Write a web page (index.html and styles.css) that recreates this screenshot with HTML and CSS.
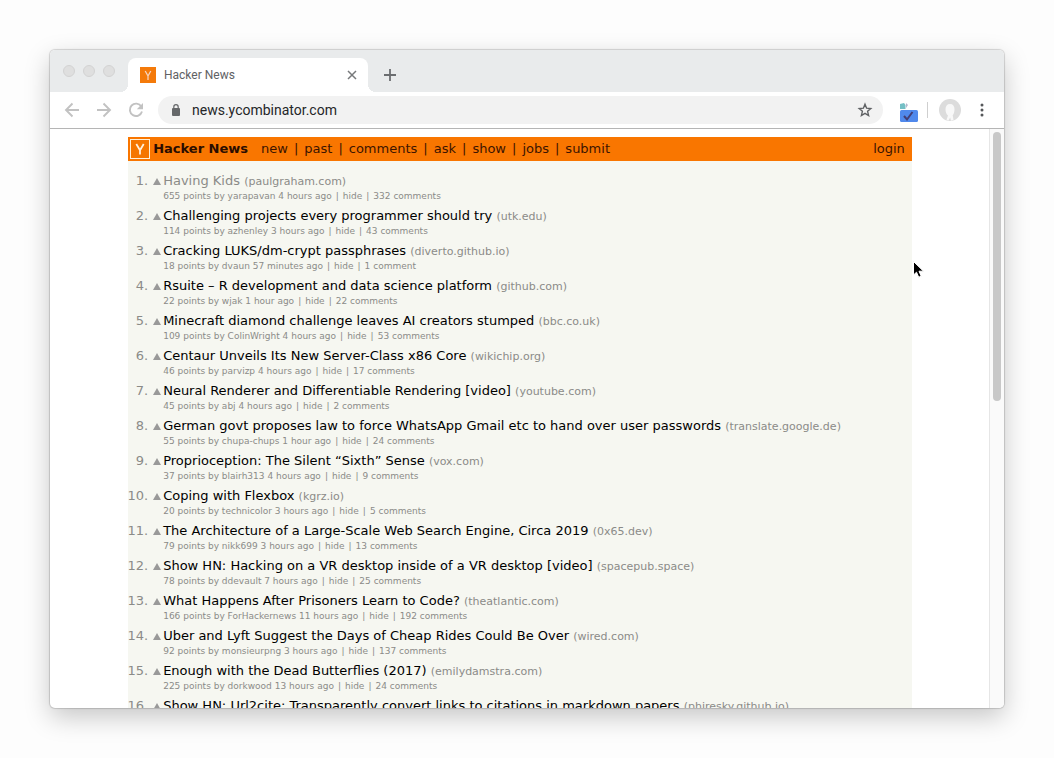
FILE: index.html
```html
<!DOCTYPE html>
<html lang="en">
<head>
<meta charset="utf-8">
<title>Hacker News</title>
<link rel="stylesheet" href="styles.css">
</head>
<body>
<div class="window">
  <header class="tabstrip">
    <div class="lights"><i></i><i></i><i></i></div>
    <div class="tab">
      <svg class="favicon" viewBox="0 0 16 16" aria-hidden="true"><rect width="16" height="16" fill="#f47a0a"/><path d="M5.2 4 8 9l2.800-5M8 8.500V13" fill="none" stroke="#f6d3bd" stroke-width="1.300"/></svg>
      <span class="tab-title">Hacker News</span>
      <button class="icon tab-close" aria-label="Close tab"><svg width="10" height="10" viewBox="0 0 10 10"><path d="M1 1l8 8M9 1l-8 8" stroke="#77797b" stroke-width="1.500"/></svg></button>
    </div>
    <button class="icon new-tab" aria-label="New tab"><svg width="12" height="12" viewBox="0 0 12 12"><path d="M6 0v12M0 6h12" stroke="#6b6d70" stroke-width="1.800"/></svg></button>
  </header>
  <div class="toolbar">
    <button class="icon" aria-label="Back"><svg width="16" height="16" viewBox="0 0 16 16"><path d="M15 8H2M8.500 1.500 2 8l6.500 6.500" fill="none" stroke="#c2c2c2" stroke-width="1.900"/></svg></button>
    <button class="icon" aria-label="Forward"><svg width="16" height="16" viewBox="0 0 16 16"><path d="M1 8h13M7.500 1.500 14 8l-6.500 6.500" fill="none" stroke="#c2c2c2" stroke-width="1.900"/></svg></button>
    <button class="icon" aria-label="Reload"><svg width="16" height="16" viewBox="0 0 16 16"><path d="M13.300 4.500A6.200 6.200 0 1 0 14 9.500" fill="none" stroke="#c2c2c2" stroke-width="1.900"/><path d="M15 1v6.200H8.800z" fill="#c2c2c2"/></svg></button>
    <div class="address">
      <svg class="lock" width="10" height="12" viewBox="0 0 10 12" aria-hidden="true"><rect x="1" y="4" width="8" height="8" rx="1" fill="#66686a"/><path d="M2.800 5V2.900a2.200 2.200 0 0 1 4.400 0V5" fill="none" stroke="#66686a" stroke-width="1.200"/></svg>
      <input type="text" aria-label="Address" value="news.ycombinator.com">
      <button class="icon" aria-label="Bookmark"><svg width="16" height="16" viewBox="0 0 16 16"><path d="M8 2.200l1.600 4 4.200.3-3.200 2.800 1 4.200L8 11.300l-3.600 2.200 1-4.200-3.200-2.800 4.200-.3z" fill="none" stroke="#606265" stroke-width="1.400"/></svg></button>
    </div>
    <button class="icon ext" aria-label="Extension"><svg width="18" height="22" viewBox="0 0 18 22"><path d="M0 4l4-1 1.500 2v4H0z" fill="#74bfc5"/><path d="M6 3l2 2-2 3z" fill="#b6b5cb"/><rect y="10" width="18" height="12" rx="1.500" fill="#5089ec"/><path d="M4 16l3 3.500L12.500 12" fill="none" stroke="#443f75" stroke-width="2"/></svg></button>
    <span class="divider"></span>
    <button class="icon" aria-label="Profile"><svg width="22" height="22" viewBox="0 0 22 22"><circle cx="11" cy="11" r="11" fill="#dcdcdc"/><path d="M11 5c3 0 4.500 2 4.500 5.500 0 2.500-.8 4.700-1.800 5.700l.8 4.600a11 11 0 0 1-2.500 1l-.8-3.300-1.700 3a11 11 0 0 1-2-.7l1.500-4.400C7.500 15.500 6.500 13 6.500 10.500 6.500 7 8 5 11 5z" fill="#f8f8f8"/></svg></button>
    <button class="icon" aria-label="Menu"><svg width="4" height="14" viewBox="0 0 4 14"><g fill="#55575a"><circle cx="2" cy="2" r="1.500"/><circle cx="2" cy="7" r="1.500"/><circle cx="2" cy="12" r="1.500"/></g></svg></button>
  </div>
  <div class="viewport">
    <main class="page">
      <div class="hn">
        <nav class="topbar">
          <a class="logo" href="#" aria-label="Home"><svg width="20" height="20" viewBox="0 0 20 20"><rect x=".5" y=".5" width="19" height="19" fill="#f57600" stroke="#fff0d8"/><path d="M6.300 5 10 11.200 13.700 5M10 10.500V15.500" fill="none" stroke="#fff0dc" stroke-width="1.800"/></svg></a>
          <a class="brand" href="#">Hacker News</a>
          <span class="links"><a href="#">new</a><span>|</span><a href="#">past</a><span>|</span><a href="#">comments</a><span>|</span><a href="#">ask</a><span>|</span><a href="#">show</a><span>|</span><a href="#">jobs</a><span>|</span><a href="#">submit</a></span>
          <a class="login" href="#">login</a>
        </nav>
        <ol class="stories" id="stories"></ol>
      </div>
    </main>
    <div class="scrollbar"><div class="thumb"></div></div>
  </div>
</div>
<svg class="cursor" width="12" height="18" viewBox="0 0 12 18" aria-hidden="true"><path d="M.5.500v13.500l3-2.800 2.200 5 2.500-1-2.200-5h4.500z" fill="#000" stroke="#fff" stroke-width="1"/></svg>
<script src="stories.js"></script>
</body>
</html>
```
FILE: styles.css
```css
* { box-sizing: border-box; }
body {
  margin: 0;
  padding: 50px;
  height: 100vh;
  position: relative;
  overflow: hidden;
  background: #fdfdfd;
  font-family: "DejaVu Sans", Verdana, sans-serif;
}
a { color: inherit; text-decoration: none; }
.window {
  height: 100%;
  display: flex;
  flex-direction: column;
  overflow: hidden;
  background: #fff;
  border-radius: 5px;
  box-shadow: 0 0 1px 1px rgba(0, 0, 0, .15), 0 9px 26px rgba(0, 0, 0, .22);
}
.icon {
  width: 24px;
  height: 24px;
  padding: 0;
  border: 0;
  background: none;
  display: flex;
  align-items: center;
  justify-content: center;
  flex: none;
}
.tabstrip {
  height: 42px;
  flex: none;
  display: flex;
  align-items: flex-end;
  background: #e9ebec;
}
.lights {
  width: 78px;
  height: 42px;
  padding-left: 13px;
  display: flex;
  gap: 8px;
  align-items: center;
}
.lights i {
  width: 12px;
  height: 12px;
  border-radius: 50%;
  background: #dfdfdf;
  border: 1px solid #d3d3d3;
}
.tab {
  position: relative;
  width: 240px;
  height: 34px;
  padding: 0 4px 0 12px;
  display: flex;
  align-items: center;
  background: #fff;
  border-radius: 8px 8px 0 0;
}
.tab::before, .tab::after {
  content: "";
  position: absolute;
  bottom: 0;
  width: 8px;
  height: 8px;
}
.tab::before { left: -8px; background: radial-gradient(circle at 0 0, transparent 8px, #fff 8px); }
.tab::after { right: -8px; background: radial-gradient(circle at 100% 0, transparent 8px, #fff 8px); }
.favicon { width: 16px; height: 16px; }
.tab-title {
  flex: 1;
  margin-left: 8px;
  font: 12px/16px Roboto, sans-serif;
  color: #5f6164;
}
.new-tab { margin: 0 0 5px 10px; }
.toolbar {
  height: 37px;
  flex: none;
  padding: 0 10px;
  display: flex;
  align-items: center;
  gap: 8px;
  border-bottom: 1px solid #b5b5b5;
}
.address {
  flex: 1;
  height: 28px;
  margin-left: 2px;
  padding: 0 6px 0 13px;
  display: flex;
  align-items: center;
  border-radius: 14px;
  background: #f2f2f2;
}
.lock { flex: none; }
.address input {
  flex: 1;
  min-width: 0;
  margin-left: 11px;
  padding: 0;
  border: 0;
  outline: 0;
  background: none;
  font: 14px/20px Roboto, sans-serif;
  color: #252628;
}
.ext { margin-left: 6px; align-items: flex-end; }
.divider { width: 1px; height: 16px; margin: 0 2px 0 -2px; background: #cfcfcf; }
.viewport { flex: 1; min-height: 0; display: flex; }
.page { flex: 1; min-width: 0; padding: 8px 8px 8px 9px; overflow: hidden; }
.hn { width: 85%; margin: 0 auto; background: #f6f7f1; }
.topbar {
  height: 24px;
  padding: 0 7px 0 2px;
  display: flex;
  align-items: center;
  background: #f97600;
  color: #3c1400;
  font-size: 13px;
  line-height: 18px;
}
.logo { display: flex; }
.brand { margin: 0 13px 0 3px; font-weight: 700; color: #2a0d00; }
.links { flex: 1; display: flex; gap: 6px; }
.stories { list-style: none; margin: 0; padding: 11px 0 0; }
.story {
  display: grid;
  grid-template-columns: 20px 15px 1fr;
  grid-template-rows: 18px 12px;
  margin-bottom: 5px;
  color: #8b8b88;
  white-space: nowrap;
}
.rank { justify-self: end; font-size: 13px; line-height: 18px; }
.vote { width: 8px; height: 18px; margin-left: 5px; padding: 0; border: 0; background: none; display: flex; align-items: center; }
.headline { font-size: 13px; line-height: 18px; color: #000; }
.visited { color: #8b8b88; }
.site { font-size: 11px; color: #8b8b88; }
.meta { grid-column: 3; display: flex; gap: 4px; font-size: 9px; line-height: 12px; }
.scrollbar { width: 15px; padding: 3px; background: #fafafa; border-left: 1px solid #e6e6e6; }
.thumb { width: 8px; height: 47%; border-radius: 4px; background: #c8c8c8; }
.cursor { position: absolute; left: 913px; top: 261px; }
```
FILE: stories.js
```js
const stories = [
  ["Having Kids", "paulgraham.com", "655 points by yarapavan 4 hours ago", "332 comments"],
  ["Challenging projects every programmer should try", "utk.edu", "114 points by azhenley 3 hours ago", "43 comments"],
  ["Cracking LUKS/dm-crypt passphrases", "diverto.github.io", "18 points by dvaun 57 minutes ago", "1 comment"],
  ["Rsuite – R development and data science platform", "github.com", "22 points by wjak 1 hour ago", "22 comments"],
  ["Minecraft diamond challenge leaves AI creators stumped", "bbc.co.uk", "109 points by ColinWright 4 hours ago", "53 comments"],
  ["Centaur Unveils Its New Server-Class x86 Core", "wikichip.org", "46 points by parvizp 4 hours ago", "17 comments"],
  ["Neural Renderer and Differentiable Rendering [video]", "youtube.com", "45 points by abj 4 hours ago", "2 comments"],
  ["German govt proposes law to force WhatsApp Gmail etc to hand over user passwords", "translate.google.de", "55 points by chupa-chups 1 hour ago", "24 comments"],
  ["Proprioception: The Silent “Sixth” Sense", "vox.com", "37 points by blairh313 4 hours ago", "9 comments"],
  ["Coping with Flexbox", "kgrz.io", "20 points by technicolor 3 hours ago", "5 comments"],
  ["The Architecture of a Large-Scale Web Search Engine, Circa 2019", "0x65.dev", "79 points by nikk699 3 hours ago", "13 comments"],
  ["Show HN: Hacking on a VR desktop inside of a VR desktop [video]", "spacepub.space", "78 points by ddevault 7 hours ago", "25 comments"],
  ["What Happens After Prisoners Learn to Code?", "theatlantic.com", "166 points by ForHackernews 11 hours ago", "192 comments"],
  ["Uber and Lyft Suggest the Days of Cheap Rides Could Be Over", "wired.com", "92 points by monsieurpng 3 hours ago", "137 comments"],
  ["Enough with the Dead Butterflies (2017)", "emilydamstra.com", "225 points by dorkwood 13 hours ago", "24 comments"],
  ["Show HN: Url2cite: Transparently convert links to citations in markdown papers", "phiresky.github.io", "", ""]
];

document.getElementById("stories").innerHTML = stories.map(([title, site, info, comments], i) => `
  <li class="story">
    <span class="rank">${i + 1}.</span>
    <button class="vote" aria-label="Upvote"><svg width="8" height="8" viewBox="0 0 8 8"><path d="M4 1l4 7H0z" fill="#999"/></svg></button>
    <span class="headline"><a href="#"${i === 0 ? ' class="visited"' : ""}>${title}</a> <span class="site">(<a href="#">${site}</a>)</span></span>
    ${info ? `<span class="meta"><span>${info}</span><span>|</span><a href="#">hide</a><span>|</span><a href="#">${comments}</a></span>` : ""}
  </li>`).join("");
```
